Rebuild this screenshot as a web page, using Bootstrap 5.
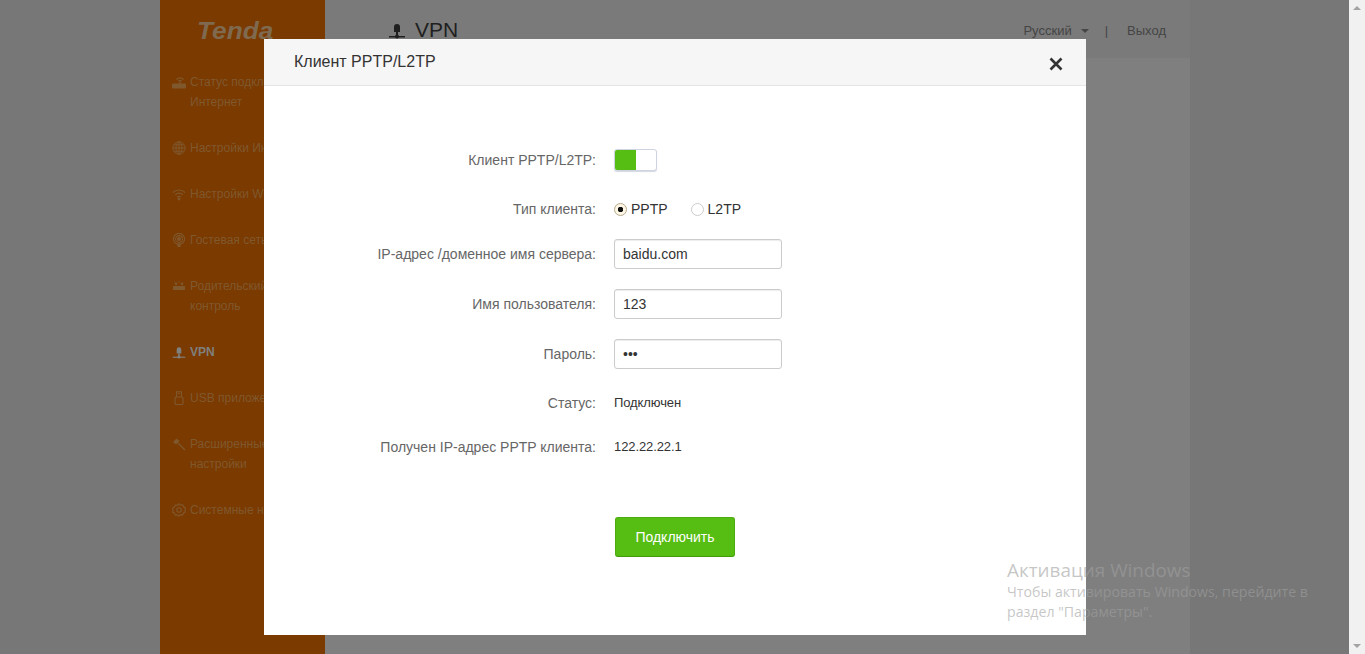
<!DOCTYPE html>
<html lang="ru">
<head>
  <meta charset="UTF-8" />
  <title>Клиент PPTP/L2TP</title>
  <meta name="viewport" content="width=device-width, initial-scale=1">
  <link href="https://cdn.jsdelivr.net/npm/bootstrap@5.3.3/dist/css/bootstrap.min.css" rel="stylesheet">
  <style>
    html, body { height: 100%; overflow: hidden; }
    body { font-family: "Liberation Sans", Arial, sans-serif; font-size: 14px; color: #333; background: #f1f1f1; }
    .page-wrap { width: 1349px; height: 654px; background: #777; }
    .side-menu { width: 165px; margin-left: 160px; background: #7a3a00; }
    .logo-box { height: 72px; padding: 18px 0 0 37px; color: #7f6a50; font-style: italic; font-weight: 700; font-size: 23px; line-height: 26px; }
    .logo-box span { display: inline-block; transform: scaleX(1.14); transform-origin: left center; }
    .menu-item { display: flex; margin-bottom: 26px; padding-left: 12px; color: #80582e; font-size: 12px; line-height: 20px; white-space: nowrap; }
    .menu-item svg { flex: none; width: 14px; height: 14px; margin: 3px 4px 0 0; }
    .menu-active { color: #80807e; font-weight: 700; }
    .main-part { width: 865px; background: #7f7f7f; }
    .top-bar { height: 58px; padding: 16px 24px 0 63px; background: #7a7a7a; }
    .vpn-title { font-size: 21px; line-height: 28px; color: #1f1f1f; }
    .vpn-title svg { width: 16px; height: 18px; margin: 0 10px 0 1px; }
    .top-links { font-size: 13px; line-height: 29px; color: #454545; }
    .caret-down { margin-left: 9px; border-top: 4px solid #454545; border-left: 4px solid transparent; border-right: 4px solid transparent; }
    .links-sep { margin: 0 19px 0 16px; }
    .fake-scroll { width: 16px; height: 654px; padding: 6px 0 6px; }
    .fake-scroll i { border-left: 4px solid transparent; border-right: 4px solid transparent; }
    .arrow-up { border-bottom: 4px solid #a3a3a3; }
    .arrow-down { border-top: 4px solid #a3a3a3; }
    .dlg-box { position: absolute; left: 264px; top: 39px; width: 822px; height: 596px; background: #fff; border: 0; border-radius: 0; }
    .dlg-head { height: 47px; padding: 0 23px 0 30px; background: #f6f6f6; border-bottom: 1px solid #e5e5e5; border-radius: 0; }
    .dlg-title { font-size: 16px; line-height: 22px; margin-bottom: 1px; color: #333; }
    .dlg-close { width: 14px; height: 14px; margin-top: 3px; }
    .dlg-body { padding: 63px 0 0; }
    .form-lbl { width: 332px; margin-right: 18px; text-align: right; font-size: 14px; line-height: 20px; color: #666; }
    .form-val { font-size: 13px; line-height: 20px; letter-spacing: -.1px; color: #333; }
    .gap-20 { margin-top: 20px; }
    .gap-28 { margin-top: 28px; }
    .tenda-input { width: 168px; height: 30px; padding: 0 8px; border-color: #ccc; border-radius: 3px; font-size: 14px; color: #333; box-shadow: inset 0 1px 1px rgba(0,0,0,.075); }
    .switch-box { width: 43px; height: 22px; overflow: hidden; background: #fff; border: 1px solid #cfd4e2; border-radius: 3px; box-shadow: 0 1px 1px rgba(90,100,140,.25); }
    .switch-box b { width: 21px; background: #56bd12; }
    .radio-pick { width: 13px; height: 13px; margin: 0 4px 0 0; border-color: #ccc; }
    .radio-pick:checked { background-color: #fff7e6; border-color: #b5a98c; background-image: radial-gradient(circle, #111 0, #111 2.5px, transparent 3px); }
    .radio-text { margin-right: 23px; font-size: 14px; line-height: 20px; color: #333; }
    .connect-btn { width: 120px; height: 40px; margin: 60px 0 0 351px; padding: 0; background: #56bd12; border: 1px solid #4eab10; border-bottom-color: #429a0a; border-radius: 3px; color: #fff; font-size: 14px; }
    .win-mark { position: absolute; left: 1007px; top: 558px; width: 330px; color: rgba(160,160,160,.6); font-family: "Open Sans", sans-serif; font-size: 14.15px; line-height: 20px; pointer-events: none; }
    .win-head { font-size: 18.9px; line-height: 24px; }
  </style>
</head>
<body>
  <div class="d-flex">
    <div class="page-wrap d-flex">
      <div class="side-menu">
        <div class="logo-box"><span>Tenda</span></div>
        <div class="menu-item">
          <svg viewBox="0 0 14 14" fill="none" stroke="currentColor"><path d="M4.500 4.500a5 5 0 0 1 7 0M6.300 6.300a2.600 2.600 0 0 1 3.400 0" stroke-width="1.400"/><path d="M8 7v2" stroke-width="1.400"/><rect x="0" y="8.500" width="14" height="5" rx="1" fill="currentColor" stroke="none"/></svg>
          <span>Статус подключения к<br>Интернет</span>
        </div>
        <div class="menu-item">
          <svg viewBox="0 0 14 14" fill="none" stroke="currentColor" stroke-width="1"><circle cx="7" cy="7" r="6.200"/><ellipse cx="7" cy="7" rx="3" ry="6.200"/><path d="M7 1v12M1 7h12M2 3.800h10M2 10.200h10"/></svg>
          <span>Настройки Интернет</span>
        </div>
        <div class="menu-item">
          <svg viewBox="0 0 14 14" fill="none" stroke="currentColor" stroke-width="1.200"><path d="M1 5.500a8.500 8.500 0 0 1 12 0M3.200 7.800a5.300 5.300 0 0 1 7.600 0M5.200 10a2.500 2.500 0 0 1 3.600 0"/><circle cx="7" cy="12" r=".8" fill="currentColor"/></svg>
          <span>Настройки WiFi</span>
        </div>
        <div class="menu-item">
          <svg viewBox="0 0 14 14" fill="none" stroke="currentColor" stroke-width="1.100"><circle cx="7" cy="6" r="5.600"/><circle cx="7" cy="6" r="3.400"/><circle cx="7" cy="6" r="1.400" fill="currentColor"/><path d="M5.500 10.500h3V14h-3z" fill="currentColor" stroke="none"/></svg>
          <span>Гостевая сеть</span>
        </div>
        <div class="menu-item">
          <svg viewBox="0 0 14 14" fill="currentColor"><rect x="1" y="7" width="12" height="4" rx=".5"/><circle cx="4" cy="4.800" r="1.300"/><circle cx="10" cy="4.800" r="1.300"/><path d="M2 3h1M6 3h2" stroke="currentColor" stroke-width=".8"/></svg>
          <span>Родительский<br>контроль</span>
        </div>
        <div class="menu-item menu-active">
          <svg viewBox="0 0 16 18" fill="currentColor"><path d="M5 6a3 3 0 0 1 6 0v5H5z"/><rect x="7" y="11" width="2" height="4"/><rect x="0" y="15" width="16" height="1.500"/><circle cx="8" cy="15.500" r="2"/></svg>
          <span>VPN</span>
        </div>
        <div class="menu-item">
          <svg viewBox="0 0 14 14" fill="none" stroke="currentColor" stroke-width="1.100"><rect x="3" y="6" width="8" height="7.500" rx="1"/><path d="M4.500 6V.8h5V6M6 2.500h2"/></svg>
          <span>USB приложения</span>
        </div>
        <div class="menu-item">
          <svg viewBox="0 0 14 14" fill="none" stroke="currentColor"><path d="M6 6l7 7" stroke-width="1.300"/><path d="M1 5l3.500-3.500 3 2.500-3.500 3.500z" fill="currentColor" stroke="none"/></svg>
          <span>Расширенные<br>настройки</span>
        </div>
        <div class="menu-item">
          <svg viewBox="0 0 14 14" fill="none" stroke="currentColor" stroke-width="1.100"><path d="M7 .7l1.600 1.400 2.100-.3.800 2 1.900 1-.5 2.200.5 2-1.900 1-.8 2-2.100-.3L7 13.300l-1.600-1.400-2.100.3-.8-2-1.900-1 .5-2-.5-2.200 1.900-1 .8-2 2.100.3z"/><circle cx="7" cy="7" r="2.200"/></svg>
          <span>Системные настройки</span>
        </div>
      </div>
      <div class="main-part">
        <div class="top-bar d-flex justify-content-between align-items-start">
          <div class="vpn-title d-flex align-items-center">
            <svg viewBox="0 0 16 18" fill="currentColor"><path d="M5 6a3 3 0 0 1 6 0v5H5z"/><rect x="7" y="11" width="2" height="4"/><rect x="0" y="15" width="16" height="1.500"/><circle cx="8" cy="15.500" r="2"/></svg>
            <span>VPN</span>
          </div>
          <div class="top-links d-flex align-items-center">
            <span>Русский</span>
            <i class="caret-down"></i>
            <span class="links-sep">|</span>
            <span>Выход</span>
          </div>
        </div>
      </div>
    </div>
    <div class="fake-scroll d-flex flex-column justify-content-between align-items-center">
      <i class="arrow-up"></i>
      <i class="arrow-down"></i>
    </div>
  </div>

  <div class="modal-content dlg-box">
    <div class="modal-header dlg-head d-flex justify-content-between align-items-center">
      <div class="dlg-title">Клиент PPTP/L2TP</div>
      <svg class="dlg-close" viewBox="0 0 14 14" fill="none" stroke="#333" stroke-width="2.600"><path d="M1.500 1.500l11 11M12.500 1.500l-11 11"/></svg>
    </div>
    <form class="dlg-body">
      <div class="d-flex align-items-center">
        <label class="form-lbl">Клиент PPTP/L2TP:</label>
        <div class="switch-box d-flex"><b></b></div>
      </div>
      <div class="d-flex align-items-center gap-28">
        <label class="form-lbl">Тип клиента:</label>
        <input class="form-check-input radio-pick" type="radio" name="clientType" checked>
        <span class="radio-text">PPTP</span>
        <input class="form-check-input radio-pick" type="radio" name="clientType">
        <span class="radio-text">L2TP</span>
      </div>
      <div class="d-flex align-items-center gap-20">
        <label class="form-lbl">IP-адрес /доменное имя сервера:</label>
        <input class="form-control tenda-input" type="text" value="baidu.com">
      </div>
      <div class="d-flex align-items-center gap-20">
        <label class="form-lbl">Имя пользователя:</label>
        <input class="form-control tenda-input" type="text" value="123">
      </div>
      <div class="d-flex align-items-center gap-20">
        <label class="form-lbl">Пароль:</label>
        <input class="form-control tenda-input" type="password" value="123">
      </div>
      <div class="d-flex align-items-center mt-4">
        <label class="form-lbl">Статус:</label>
        <span class="form-val">Подключен</span>
      </div>
      <div class="d-flex align-items-center mt-4">
        <label class="form-lbl">Получен IP-адрес PPTP клиента:</label>
        <span class="form-val">122.22.22.1</span>
      </div>
      <button type="button" class="btn connect-btn">Подключить</button>
    </form>
  </div>

  <div class="win-mark">
    <div class="win-head">Активация Windows</div>
    <div>Чтобы активировать Windows, перейдите в<br>раздел "Параметры".</div>
  </div>
</body>
</html>
